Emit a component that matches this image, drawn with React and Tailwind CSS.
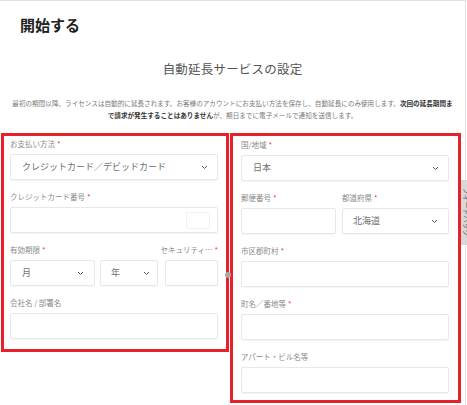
import React from "react";

const Chevron = () => (
  <svg width="7" height="5" viewBox="0 0 7 5" className="shrink-0">
    <polyline points="1,1 3.5,3.5 6,1" fill="none" stroke="#555" strokeWidth="1" />
  </svg>
);

const Label = ({ children, req, className = "" }) => (
  <div className={"h-[12px] leading-[12px] text-[7.5px] text-[#8a8a8a] whitespace-nowrap mb-[4px] " + className}>
    {children}
    {req && <span className="text-[#d33] ml-[2px]">*</span>}
  </div>
);

const Input = ({ children, className = "" }) => (
  <div className={"h-[26px] border border-[#e8e8e8] rounded-[2px] bg-white shadow-[0_1px_1px_rgba(0,0,0,0.04)] " + className}>
    {children}
  </div>
);

const Select = ({ value, pl = "pl-[11px]", pr = "pr-[9px]" }) => (
  <Input className={"flex items-center justify-between " + pl + " " + pr}>
    <span className="text-[9px] text-[#707070] whitespace-nowrap">{value}</span>
    <Chevron />
  </Input>
);

const Field = ({ label, req, children }) => (
  <div>
    <Label req={req}>{label}</Label>
    {children}
  </div>
);

export default function App() {
  return (
    <div className="relative w-[467px] h-[405px] overflow-hidden bg-white font-['Noto_Sans_CJK_JP',sans-serif]">
      <div className="w-[466px] h-[405px] border-t border-r border-[#e2e2e2] flex flex-col">
        <div className="pl-[20px] pt-[11px] h-[26px] leading-[26px] text-[15px] font-bold text-[#222]">開始する</div>
        <div className="mt-[34px] text-center text-[12.5px] leading-[16px] text-[#555] tracking-[0.2px]">自動延長サービスの設定</div>
        <div className="mt-[20px] text-center text-[6.6px] leading-[12px] text-[#7a7a7a] whitespace-nowrap">
          <div>
            最初の期間以降、ライセンスは自動的に延長されます。お客様のアカウントにお支払い方法を保存し、自動延長にのみ使用します。
            <span className="font-bold text-[#333]">次回の延長期間ま</span>
          </div>
          <div>
            <span className="font-bold text-[#333]">で請求が発生することはありません</span>が、期日までに電子メールで通知を送信します。
          </div>
        </div>

        <div className="mt-[12px] flex items-start gap-[1px] pl-[1px]">
          {/* Left column */}
          <div className="w-[228px] border-[3px] border-[#e8202a] pl-[6px] pr-[8px] pt-[2px] pb-[10px] flex flex-col gap-[11px]">
            <Field label="お支払い方法" req>
              <Select value="クレジットカード／デビッドカード" />
            </Field>
            <Field label="クレジットカード番号" req>
              <Input className="flex items-center justify-end pr-[7px]">
                <div className="w-[24px] h-[17px] border border-[#f2f2f2] rounded-[2px]" />
              </Input>
            </Field>
            <div>
              <div className="flex justify-between">
                <Label req>有効期限</Label>
                <Label req>セキュリティ…</Label>
              </div>
              <div className="flex">
                <div className="w-[85px]">
                  <Select value="月" pr="pr-[10px]" />
                </div>
                <div className="w-[58px] ml-[5px]">
                  <Select value="年" pl="pl-[10px]" pr="pr-[7px]" />
                </div>
                <div className="w-[53px] ml-[7px]">
                  <Input />
                </div>
              </div>
            </div>
            <Field label="会社名 / 部署名">
              <Input />
            </Field>
          </div>

          {/* Right column */}
          <div className="w-[231px] border-[3px] border-[#e8202a] pl-[8px] pr-[9px] pt-[3px] pb-[7px] flex flex-col gap-[11px]">
            <Field label="国/地域" req>
              <Select value="日本" />
            </Field>
            <div className="flex">
              <div className="w-[95px]">
                <Label req>郵便番号</Label>
                <Input />
              </div>
              <div className="w-[107px] ml-[6px]">
                <Label req>都道府県</Label>
                <Select value="北海道" pl="pl-[10px]" pr="pr-[10px]" />
              </div>
            </div>
            <Field label="市区郡町村" req>
              <Input />
            </Field>
            <Field label="町名／番地等" req>
              <Input />
            </Field>
            <Field label="アパート・ビル名等">
              <Input />
            </Field>
          </div>
        </div>
      </div>

      {/* small gray handle between columns */}
      <div className="absolute left-[225px] top-[272px] w-[6px] h-[6px] rounded-full bg-[#a8a8a8]" />

      {/* feedback tab */}
      <div className="absolute left-[461px] top-[180px] w-[10px] h-[65px] bg-[#d8d8d8] overflow-hidden">
        <div className="absolute left-[-27px] top-[28px] w-[65px] h-[8px] rotate-90 text-[7px] leading-[8px] text-[#555] text-center whitespace-nowrap">
          フィードバック
        </div>
      </div>
    </div>
  );
}
